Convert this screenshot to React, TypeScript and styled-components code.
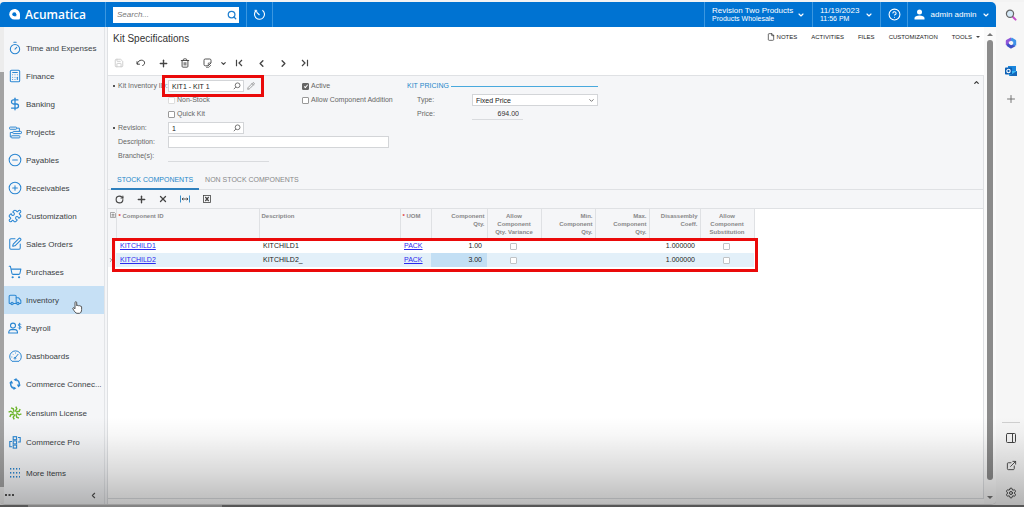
import React from "react";
import styled, { createGlobalStyle } from "styled-components";
import {
  Calculator,
  ChevronDown,
  ChevronLeft,
  ChevronRight,
  ChevronUp,
  CircleHelp,
  CircleMinus,
  CirclePlus,
  DollarSign,
  ExternalLink,
  File,
  PanelRight,
  Pencil,
  Plus,
  Puzzle,
  RotateCw,
  Save,
  Search,
  Settings,
  ShoppingCart,
  SquarePen,
  Timer,
  Trash2,
  Truck,
  X,
} from "lucide-react";

const blue = "#0073d2";
const line = "#dfe1e4";
const panel = "#f5f6f8";
const sans = `"Liberation Sans", Arial, sans-serif`;

const GlobalStyle = createGlobalStyle`
  *, *::before, *::after { box-sizing: border-box; }
  body { margin: 0; background: #f3f3f3; font-family: ${sans}; font-size: 7px; color: #333; }
  button, input, select { font: inherit; color: inherit; margin: 0; padding: 0; border: 0; background: none; }
  svg { display: block; flex: none; }
`;

const Page = styled.div`
  position: relative;
  display: flex;
  flex-direction: column;
  height: 100vh;
  padding-top: 2px;
  overflow: hidden;
`;

const Desktop = styled.div`
  display: flex;
  flex: 1;
  min-height: 0;
`;

const AppWindow = styled.div`
  display: flex;
  flex: 1;
  flex-direction: column;
  min-width: 0;
  border-radius: 4px 5px 5px 5px;
  border-bottom: 1px solid #d8d8d8;
  background: #fff;
  overflow: hidden;
`;

const Taskbar = styled.div`
  height: 2px;
  background: linear-gradient(90deg, #777 28px, #b5b5b5 28px, #b5b5b5 222px, #777 222px);
`;

const Shade = styled.div`
  position: absolute;
  inset: auto 0 0 0;
  height: 90px;
  background: linear-gradient(rgba(0, 0, 0, 0), rgba(0, 0, 0, 0.03) 20%, rgba(0, 0, 0, 0.14) 60%, rgba(0, 0, 0, 0.28));
  pointer-events: none;
`;

/* Top bar */

const TopBar = styled.header`
  display: flex;
  height: 25px;
  background: ${blue};
  color: #fff;
`;

const Brand = styled.a`
  display: flex;
  align-items: center;
  gap: 5px;
  width: 105px;
  padding-left: 9px;
  color: #fff;
  font: 600 12px/16px "Open Sans", "Noto Sans", sans-serif;
  text-decoration: none;
`;

const TopCell = styled.div<{ $w?: number; $grow?: boolean; $pad?: number }>`
  display: flex;
  align-items: center;
  justify-content: center;
  flex: ${(p) => (p.$grow ? "1" : "none")};
  width: ${(p) => (p.$w ? `${p.$w}px` : "auto")};
  padding: 0 ${(p) => p.$pad ?? 0}px;
  border-left: 1px solid #3b97e0;
`;

const TopButton = styled.button`
  display: flex;
  align-items: center;
  justify-content: space-between;
  width: 100%;
  font-size: 8px;
  text-align: left;
  white-space: nowrap;
`;

const IconButton = styled.button`
  display: flex;
  align-items: center;
  justify-content: center;
`;

const TwoLines = styled.span`
  display: flex;
  flex-direction: column;
  line-height: 8px;

  small {
    font-size: 7px;
    line-height: 8px;
  }
`;

const SearchBox = styled.label`
  display: flex;
  align-items: center;
  width: 126px;
  height: 16px;
  padding: 0 2px 0 4px;
  background: #fff;
  color: #1f7fd0;

  input {
    flex: 1;
    min-width: 0;
    outline: 0;
    font-size: 8px;
    font-style: italic;
  }
  input::placeholder { color: #777; }
`;

/* Side navigation */

const Body = styled.div`
  display: flex;
  flex: 1;
  min-height: 0;
`;

const OuterScroll = styled.div`
  display: flex;
  flex-direction: column;
  width: 4px;
  padding: 45px 0 17px;
  background: #ececec;

  &::before {
    content: "";
    flex: 1;
    background: #a3a3a3;
  }
`;

const Nav = styled.nav`
  display: flex;
  flex-direction: column;
  width: 101px;
  padding-top: 7px;
  border-right: 1px solid #e2e4e7;
  background: ${panel};
`;

const Gutter = styled.div`
  width: 3px;
  border-right: 1px solid ${line};
  background: ${panel};
`;

const NavItem = styled.a<{ $h: number; $active?: boolean }>`
  position: relative;
  display: flex;
  align-items: center;
  gap: 4px;
  height: ${(p) => p.$h}px;
  padding-left: 4px;
  background: ${(p) => (p.$active ? "#c6e0f5" : "none")};
  color: #3a3f45;
  font-size: 8px;
  text-decoration: none;
  white-space: nowrap;
`;

const NavGlyph = styled.span`
  display: flex;
  justify-content: center;
  width: 14px;
  color: #2a86d2;
`;

const NavFooter = styled.div`
  display: flex;
  align-items: center;
  justify-content: space-between;
  flex: 1;
  padding: 0 6px 3px 1px;
  color: #555;
`;

const HandCursor = styled.span`
  position: absolute;
  left: 68px;
  top: 15px;
  color: #444;
`;

/* Main area */

const Main = styled.main`
  display: flex;
  flex: 1;
  flex-direction: column;
  min-width: 0;
`;

const TitleRow = styled.div`
  display: flex;
  align-items: center;
  justify-content: space-between;
  height: 24px;
  padding: 0 4px 0 5px;
`;

const Title = styled.h1`
  margin: 0;
  color: #333;
  font-size: 10px;
  font-weight: 400;
  line-height: 12px;
`;

const PageMenu = styled.div`
  display: flex;
  gap: 14px;
  padding-bottom: 4px;
`;

const MenuButton = styled.button`
  display: flex;
  align-items: center;
  gap: 2px;
  color: #222;
  font-size: 6px;
  line-height: 8px;
`;

const Caret = styled.i`
  margin-left: 2px;
  border: 2px solid transparent;
  border-top-color: #444;
  border-bottom: 0;
`;

const Toolbar = styled.div<{ $h: number }>`
  display: flex;
  align-items: center;
  height: ${(p) => p.$h}px;
  color: #444;
`;

const ToolButton = styled.button<{ $faded?: boolean }>`
  display: flex;
  align-items: center;
  justify-content: center;
  width: 22px;
  height: 14px;
  color: ${(p) => (p.$faded ? "#ccc" : "#444")};
`;

const MoreButton = styled(ToolButton)`
  width: 10px;
`;

const Content = styled.div`
  display: flex;
  flex: 1;
  flex-direction: column;
  min-height: 0;
  margin-bottom: 5px;
  border: solid ${line};
  border-width: 1px 1px 1px 0;
`;

const FormGrid = styled.section`
  display: grid;
  position: relative;
  grid-template-columns: 60px 134px 105px 65px 126px;
  grid-template-rows: repeat(6, 14px);
  align-items: center;
  padding: 3px 0 8px;
  background: ${panel};
`;

const Collapse = styled(IconButton)`
  position: absolute;
  top: 3px;
  right: 3px;
`;

const Label = styled.label<{ $row: number; $col?: number; $required?: boolean }>`
  grid-row: ${(p) => p.$row};
  grid-column: ${(p) => p.$col ?? 1};
  padding-left: 5px;
  color: #666;
  line-height: 8px;
  white-space: nowrap;

  &::before {
    content: "";
    display: inline-block;
    width: 2px;
    height: 2px;
    margin-right: 3px;
    vertical-align: middle;
    background: ${(p) => (p.$required ? "#555" : "transparent")};
  }
`;

const Cell = styled.div<{ $row: number; $col: string }>`
  grid-row: ${(p) => p.$row};
  grid-column: ${(p) => p.$col};
  display: flex;
  align-items: center;
  position: relative;
  gap: 3px;
`;

const Box = styled.div<{ $w: number }>`
  display: flex;
  align-items: center;
  width: ${(p) => p.$w}px;
  height: 12px;
  padding: 0 2px 0 3px;
  border: 1px solid #d3d5d8;
  background: #fff;
  color: #222;

  input, select {
    flex: 1;
    min-width: 0;
    height: 10px;
    outline: 0;
    appearance: none;
  }
  svg { color: #666; }
`;

const Underlined = styled.input<{ $w: number }>`
  width: ${(p) => p.$w}px;
  height: 12px;
  padding-right: 4px;
  border-bottom: 1px solid #d9dbde;
  color: #333;
  text-align: right;
`;

const CheckLabel = styled.label`
  display: flex;
  align-items: center;
  gap: 2px;
  color: #666;
  line-height: 8px;
  white-space: nowrap;
`;

const Check = styled.input<{ $pale?: boolean }>`
  display: grid;
  place-items: center;
  width: 7px;
  height: 7px;
  border: 1px solid ${(p) => (p.$pale ? "#c0c3c6" : "#999")};
  border-radius: 1px;
  background: #fff;
  appearance: none;

  &:disabled { border-color: #ddd; }
  &:checked { background: #666; border-color: #666; }
  &:checked::after {
    content: "";
    width: 2px;
    height: 4px;
    border: solid #fff;
    border-width: 0 1px 1px 0;
    transform: rotate(40deg);
  }
`;

const GroupTitle = styled.h2`
  display: flex;
  align-items: center;
  flex: 1;
  gap: 2px;
  margin: 0;
  color: #1d87c9;
  font-size: 7px;
  font-weight: 400;
  line-height: 8px;
  white-space: nowrap;

  &::after {
    content: "";
    flex: 1;
    height: 1px;
    background: #48a9dd;
  }
`;

const RedFrame = styled.div<{ $inset: string }>`
  position: absolute;
  inset: ${(p) => p.$inset};
  border: 3px solid #ea0a0a;
  pointer-events: none;
`;

const Tabs = styled.div`
  display: flex;
  height: 19px;
  padding-left: 3px;
  border-bottom: 1px solid ${line};
  background: ${panel};
`;

const Tab = styled.button<{ $on?: boolean }>`
  margin-bottom: -1px;
  padding: 0 6px;
  border-bottom: 2px solid ${(p) => (p.$on ? "#2f80bd" : "transparent")};
  color: ${(p) => (p.$on ? "#1d87c9" : "#888")};
  white-space: nowrap;
`;

const GridArea = styled.div`
  position: relative;
  width: fit-content;
`;

const GridTools = styled(Toolbar)`
  border-bottom: 1px solid ${line};
  background: ${panel};
`;

const Table = styled.table`
  width: 646px;
  border-collapse: collapse;
  table-layout: fixed;
`;

const Th = styled.th<{ $align?: string }>`
  height: 30px;
  padding: 3px 2px 0;
  border-right: 1px solid ${line};
  background: ${panel};
  color: #888;
  font-size: 6px;
  line-height: 8px;
  text-align: ${(p) => p.$align ?? "left"};
  vertical-align: top;
  white-space: pre-line;

  b { color: #d33; }
`;

const Row = styled.tr<{ $on?: boolean }>`
  height: 14px;
  background: ${(p) => (p.$on ? "#e3f0f9" : "#fff")};
`;

const Td = styled.td<{ $align?: string; $focus?: boolean }>`
  padding: 0 5px 0 4px;
  background: ${(p) => (p.$focus ? "#c3dff4" : "none")};
  color: #222;
  line-height: 8px;
  text-align: ${(p) => p.$align ?? "left"};

  a { color: #2a2aee; }
  input { margin: 0 auto; }
`;

const MarkTd = styled.td`
  padding: 0;
  background: ${panel};
  color: #777;
`;

/* Page scrollbar */

const PageScroll = styled.div`
  display: flex;
  flex-direction: column;
  align-items: center;
  width: 12px;
  padding: 6px 0 5px;
  background: #fafafa;
`;

const Thumb = styled.div`
  flex: 1;
  width: 6px;
  margin: 4px 0 16px;
  border-radius: 3px;
  background: #8b8b8b;
`;

const Arrow = styled.i<{ $down?: boolean }>`
  border: 3px solid transparent;
  ${(p) => (p.$down ? "border-top-color: #777; border-bottom: 0;" : "border-bottom-color: #777; border-top: 0;")}
`;

/* Browser side bar */

const EdgeBar = styled.aside`
  display: flex;
  flex-direction: column;
  align-items: center;
  justify-content: space-between;
  width: 28px;
  padding: 7px 0 6px 2px;
  background: #f6f6f6;
`;

const EdgeGroup = styled.div<{ $rule?: boolean }>`
  display: flex;
  flex-direction: column;
  align-items: center;
  gap: 16px;
  width: 18px;
  padding-top: ${(p) => (p.$rule ? "9px" : "0")};
  border-top: ${(p) => (p.$rule ? "1px solid #d0d0d0" : "0")};
  color: #444;
`;

const icon = { size: 14, strokeWidth: 1.8 };
const tool = { size: 10, strokeWidth: 2.2 };
const caret = { size: 8, strokeWidth: 3.5 };

const ProjectsIcon = () => (
  <svg width="13" height="13" viewBox="0 0 12 12" fill="none" stroke="currentColor" strokeWidth="0.9">
    <rect x="0.5" y="1" width="6.5" height="2" rx="0.6" />
    <rect x="3.5" y="5" width="8" height="2" rx="0.6" />
    <rect x="2" y="9" width="8" height="2" rx="0.6" />
    <path d="M7 2h2.600v3M3.500 6H1.200v4H2" />
  </svg>
);

const PayrollIcon = () => (
  <svg width="14" height="12" viewBox="0 0 14 12" fill="none" stroke="currentColor" strokeWidth="1.1">
    <circle cx="5" cy="3.6" r="2.5" />
    <path d="M.7 11c0-2.200 1-3.400 2.600-3.400h3.600c1.600 0 2.600 1.200 2.600 3.400z" />
    <path strokeWidth="0.9" d="M13 2.700c-.3-.6-.8-.8-1.400-.8-.9 0-1.400.4-1.400 1.100 0 .6.5.9 1.400 1.100 1 .2 1.500.5 1.500 1.200s-.6 1.100-1.500 1.100c-.7 0-1.200-.2-1.500-.8M11.600.8v6.800" />
  </svg>
);

const DashboardIcon = () => (
  <svg width="13" height="13" viewBox="0 0 13 13" fill="none" stroke="currentColor">
    <path d="M3 11.300a5.800 5.800 0 1 1 7 0zM6 8l3.300-4" />
    <circle cx="6" cy="8.200" r=".9" />
    <path strokeWidth="0.8" d="M2.300 7h1M3.600 3.900l.7.7M6.500 2.500v1" />
  </svg>
);

const KensiumIcon = () => (
  <svg width="14" height="14" viewBox="-7 -7 14 14" fill="none" stroke="#6db52c" strokeWidth="1.4">
    {[0, 45, 90, 135, 180, 225, 270, 315].map((a) => (
      <path key={a} transform={`rotate(${a})`} d="M0-1.500 1.800-4.200.8-6.400" />
    ))}
  </svg>
);

const CommerceProIcon = () => (
  <svg width="12" height="13" viewBox="0 0 12 13" fill="none" stroke="currentColor" strokeWidth="1.1">
    <rect x="4.2" y=".7" width="3.400" height="3" />
    <rect x="4.2" y="4.9" width="3.400" height="3" />
    <rect x="4.2" y="9.1" width="3.400" height="3" />
    <path d="M9 1.500h2.200v4.500H9M3 5.500H.8v5.200H3" />
  </svg>
);

const DotsIcon = () => (
  <svg width="10" height="10" viewBox="0 0 10 10" fill="currentColor">
    {[0, 3, 6, 9].map((x) => [0, 4, 8].map((y) => <rect key={`${x}-${y}`} x={x} y={y} width="1.3" height="1.6" />))}
  </svg>
);

const SyncIcon = () => (
  <svg width="12" height="12" viewBox="0 0 12 12" fill="none" stroke="currentColor" strokeWidth="1.4">
    <path d="M5 10.400A4.400 4.400 0 0 1 2.200 4M7 1.600A4.400 4.400 0 0 1 9.800 8" />
    <path fill="currentColor" stroke="none" d="M7.500 0v3.600L4.600 1.800zM4.500 12V8.400l2.900 1.800zM0 5.200 2.600 2.400 4.200 5.600zM12 6.800 9.400 9.600 7.800 6.400z" />
  </svg>
);

const UndoIcon = () => (
  <svg width="10" height="8" viewBox="0 0 10 8" fill="none" stroke="currentColor">
    <path d="M1.200 5C1.800 2.500 3.500 1.200 5.500 1.200c1.900 0 3.100 1.200 3.100 2.700 0 1.300-.9 2.300-2.300 2.700M1 2.300v2.900h2.900" />
  </svg>
);

const StepIcon = ({ last }: { last?: boolean }) => (
  <svg width="8" height="8" viewBox="0 0 8 8" fill="none" stroke="currentColor" strokeWidth="1.2">
    {last ? <path d="M1 1l3 3-3 3M6.500.7v6.600" /> : <path d="M7 1 4 4l3 3M1.500.7v6.600" />}
  </svg>
);

const ClipboardIcon = () => (
  <svg width="9" height="10" viewBox="0 0 9 10" fill="none" stroke="currentColor" strokeWidth="0.9">
    <path d="M2.300 1h4.400Q8 1 8 2.300V5L5.200 7.800H2.300Q1 7.800 1 6.500V2.300Q1 1 2.300 1z" />
    <path strokeWidth="0.7" d="M7.800 5H5.300v2.600M3 9.300h2.800L8 7" />
  </svg>
);

const FitIcon = () => (
  <svg width="10" height="8" viewBox="0 0 10 8" fill="none">
    <path stroke="#3c8fc9" d="M.5.500v7M9.500.500v7" />
    <path stroke="#444" strokeWidth="0.9" d="M2 4h6M3.300 2.800 2 4l1.300 1.200M6.700 2.800 8 4 6.700 5.200" />
  </svg>
);

const ExcelIcon = () => (
  <svg width="8" height="8" viewBox="0 0 8 8" fill="none" stroke="#444">
    <rect x=".5" y=".5" width="7" height="7" strokeWidth="0.8" />
    <path strokeWidth="1.200" d="M2.300 2l3.400 4M5.700 2 2.300 6" />
  </svg>
);

const LookupIcon = () => (
  <svg width="8" height="8" viewBox="0 0 8 8" fill="none" stroke="currentColor" strokeWidth="0.9">
    <circle cx="4.600" cy="3.300" r="2.400" />
    <path d="M2.900 5 .8 7.200" />
  </svg>
);

const TimerGlyph = () => (
  <svg width="13" height="13" viewBox="0 0 13 13" fill="none" stroke="currentColor" strokeWidth="1.1">
    <path d="M3.200 2.500a5 5 0 1 0 6.200-.3M6.500 7 3.800 4.300" />
    <path d="M1.500 2.300h2.200v2.200" strokeWidth="0.9" />
  </svg>
);

const UserGlyph = () => (
  <svg width="11" height="11" viewBox="0 0 11 11" fill="currentColor">
    <circle cx="5.500" cy="3" r="2.500" />
    <path d="M.5 10.500V9c0-1.700 2.500-2.600 5-2.600s5 .9 5 2.600v1.500z" />
  </svg>
);

const BrandMark = () => (
  <svg width="11" height="11" viewBox="0 0 11 11">
    <path fill="#fff" d="M5.500 0C8.500 0 11 2.500 11 5.500V9q0 1.500-1.500 1.500h-4A5.200 5.200 0 0 1 5.500 0z" />
    <circle cx="5.300" cy="5.200" r="2" fill={blue} />
    <path fill={blue} d="M5.300 7.200h2v-2z" />
  </svg>
);

const GridMark = () => (
  <svg width="6" height="6" viewBox="0 0 6 6" fill="none" stroke="currentColor" strokeWidth="0.7">
    <path d="M.5.500h4l1 1v4h-5zM1.500 2.500h3M1.500 4h3M3 1.500v3" />
  </svg>
);

const HandGlyph = () => (
  <svg width="11" height="13" viewBox="0 0 11 13" fill="#fff" stroke="currentColor" strokeWidth="0.9">
    <path d="M3 7.800V1.700c0-1.400 1.700-1.400 1.700 0v3.100c.3-.8 1.500-.7 1.700.2.400-.7 1.500-.5 1.700.3.500-.5 1.500-.2 1.500.7v2.500c0 2-.9 3.800-2.200 3.800H5C3.500 12.300 2.200 10 .9 7.900c-.5-1 .6-1.600 1.200-.9z" />
  </svg>
);

const MagnifierColour = () => (
  <svg width="12" height="12" viewBox="0 0 12 12" fill="none">
    <path stroke="#c44fc8" strokeWidth="2" strokeLinecap="round" d="M8 8l2.600 2.600" />
    <circle cx="5" cy="4.800" r="3.600" fill="#d5e9f7" stroke="#666" strokeWidth="1.200" />
  </svg>
);

const CopilotGlyph = () => (
  <svg width="12" height="12" viewBox="0 0 12 12" fill="none" strokeWidth="3" strokeLinejoin="round">
    <path stroke="#8f55d8" d="M6.500 1.900 2.300 4v4" />
    <path stroke="#3d4fc4" d="M2.300 7.500 6 10l3.700-2" />
    <path stroke="#3f93e8" d="M9.700 8.500V4L6 1.900" />
  </svg>
);

const OutlookGlyph = () => (
  <svg width="12" height="12" viewBox="0 0 12 12">
    <rect x="3" y="1" width="8" height="7" fill="#1a86dd" />
    <path fill="#38b6f5" d="M4 6h8v5H4z" />
    <path fill="#1467b8" d="M4 11 12 6v5z" />
    <rect x="0" y="2.500" width="7" height="7" rx=".8" fill="#0a5fb4" />
    <circle cx="3.500" cy="6" r="1.700" fill="none" stroke="#fff" strokeWidth="1.100" />
  </svg>
);

const nav: { label: string; glyph: React.ReactNode; h?: number; active?: boolean }[] = [
  { label: "Time and Expenses", glyph: <Timer {...icon} /> },
  { label: "Finance", glyph: <Calculator {...icon} /> },
  { label: "Banking", glyph: <DollarSign {...icon} strokeWidth={2.2} /> },
  { label: "Projects", glyph: <ProjectsIcon /> },
  { label: "Payables", glyph: <CircleMinus {...icon} /> },
  { label: "Receivables", glyph: <CirclePlus {...icon} /> },
  { label: "Customization", glyph: <Puzzle {...icon} /> },
  { label: "Sales Orders", glyph: <SquarePen {...icon} /> },
  { label: "Purchases", glyph: <ShoppingCart {...icon} /> },
  { label: "Inventory", glyph: <Truck {...icon} />, active: true },
  { label: "Payroll", glyph: <PayrollIcon /> },
  { label: "Dashboards", glyph: <DashboardIcon /> },
  { label: "Commerce Connec...", glyph: <SyncIcon /> },
  { label: "Kensium License", glyph: <KensiumIcon />, h: 30 },
  { label: "Commerce Pro", glyph: <CommerceProIcon /> },
  { label: "More Items", glyph: <DotsIcon />, h: 34 },
];

const columns: { title: string; w: number; align?: string; required?: boolean }[] = [
  { title: "Component ID", w: 143, required: true },
  { title: "Description", w: 141 },
  { title: "UOM", w: 31, required: true },
  { title: "Component\nQty.", w: 56, align: "right" },
  { title: "Allow\nComponent\nQty. Variance", w: 54, align: "center" },
  { title: "Min.\nComponent\nQty.", w: 54, align: "right" },
  { title: "Max.\nComponent\nQty.", w: 54, align: "right" },
  { title: "Disassembly\nCoeff.", w: 51, align: "right" },
  { title: "Allow\nComponent\nSubstitution", w: 54, align: "center" },
];

const rows = [
  { id: "KITCHILD1", description: "KITCHILD1", uom: "PACK", qty: "1.00", coeff: "1.000000" },
  { id: "KITCHILD2", description: "KITCHILD2_", uom: "PACK", qty: "3.00", coeff: "1.000000", on: true },
];

export default function App() {
  return (
    <Page>
      <GlobalStyle />
      <Desktop>
        <AppWindow>
          <TopBar>
            <Brand href="#">
              <BrandMark />
              Acumatica
            </Brand>
            <TopCell $w={141}>
              <SearchBox>
                <input type="search" aria-label="Search" placeholder="Search..." />
                <Search size={10} strokeWidth={3} />
              </SearchBox>
            </TopCell>
            <TopCell $w={26}>
              <IconButton aria-label="Recent">
                <TimerGlyph />
              </IconButton>
            </TopCell>
            <TopCell $grow />
            <TopCell $w={108} $pad={7}>
              <TopButton>
                <TwoLines>
                  Revision Two Products
                  <small>Products Wholesale</small>
                </TwoLines>
                <ChevronDown {...caret} />
              </TopButton>
            </TopCell>
            <TopCell $w={68} $pad={7}>
              <TopButton>
                <TwoLines>
                  11/19/2023
                  <small>11:56 PM</small>
                </TwoLines>
                <ChevronDown {...caret} />
              </TopButton>
            </TopCell>
            <TopCell $w={27}>
              <IconButton aria-label="Help">
                <CircleHelp size={13} />
              </IconButton>
            </TopCell>
            <TopCell $w={89} $pad={6}>
              <TopButton>
                <UserGlyph />
                <span>admin admin</span>
                <ChevronDown {...caret} />
              </TopButton>
            </TopCell>
          </TopBar>

          <Body>
            <OuterScroll />
            <Nav>
              {nav.map((n) => (
                <NavItem key={n.label} href="#" $h={n.h ?? 28} $active={n.active}>
                  <NavGlyph>{n.glyph}</NavGlyph>
                  {n.label}
                  {n.active && (
                    <HandCursor>
                      <HandGlyph />
                    </HandCursor>
                  )}
                </NavItem>
              ))}
              <NavFooter>
                <IconButton aria-label="Options">
                  <svg width="9" height="3" viewBox="0 0 9 3" fill="currentColor">
                    <rect width="2" height="2" />
                    <rect width="2" height="2" x="3.500" />
                    <rect width="2" height="2" x="7" />
                  </svg>
                </IconButton>
                <IconButton aria-label="Collapse menu">
                  <ChevronLeft size={9} strokeWidth={3} />
                </IconButton>
              </NavFooter>
            </Nav>
            <Gutter />

            <Main>
              <TitleRow>
                <Title>Kit Specifications</Title>
                <PageMenu>
                  <MenuButton>
                    <File size={8} />
                    NOTES
                  </MenuButton>
                  <MenuButton>ACTIVITIES</MenuButton>
                  <MenuButton>FILES</MenuButton>
                  <MenuButton>CUSTOMIZATION</MenuButton>
                  <MenuButton>
                    TOOLS
                    <Caret />
                  </MenuButton>
                </PageMenu>
              </TitleRow>

              <Toolbar $h={24}>
                <ToolButton aria-label="Save" $faded><Save {...tool} /></ToolButton>
                <ToolButton aria-label="Undo"><UndoIcon /></ToolButton>
                <ToolButton aria-label="Add"><Plus size={11} strokeWidth={3} /></ToolButton>
                <ToolButton aria-label="Delete"><Trash2 {...tool} /></ToolButton>
                <ToolButton aria-label="Copy"><ClipboardIcon /></ToolButton>
                <MoreButton aria-label="Copy options"><ChevronDown size={7} strokeWidth={4} /></MoreButton>
                <ToolButton aria-label="First"><StepIcon /></ToolButton>
                <ToolButton aria-label="Previous"><ChevronLeft size={11} strokeWidth={3} /></ToolButton>
                <ToolButton aria-label="Next"><ChevronRight size={11} strokeWidth={3} /></ToolButton>
                <ToolButton aria-label="Last"><StepIcon last /></ToolButton>
              </Toolbar>

              <Content>
                <FormGrid>
                  <Label $row={1} $required htmlFor="kit">Kit Inventory ID:</Label>
                  <Cell $row={1} $col="2">
                    <Box $w={76}>
                      <input id="kit" defaultValue="KIT1 - KIT 1" />
                      <LookupIcon />
                    </Box>
                    <IconButton aria-label="Edit item"><Pencil size={8} color="#777" /></IconButton>
                    <RedFrame $inset="-5px 38px -5px -6px" />
                  </Cell>
                  <Cell $row={2} $col="2">
                    <CheckLabel><Check type="checkbox" disabled />Non-Stock</CheckLabel>
                  </Cell>
                  <Cell $row={3} $col="2">
                    <CheckLabel><Check type="checkbox" />Quick Kit</CheckLabel>
                  </Cell>
                  <Label $row={4} $required htmlFor="revision">Revision:</Label>
                  <Cell $row={4} $col="2">
                    <Box $w={76}>
                      <input id="revision" defaultValue="1" />
                      <LookupIcon />
                    </Box>
                  </Cell>
                  <Label $row={5} htmlFor="description">Description:</Label>
                  <Cell $row={5} $col="2 / 4">
                    <Box $w={221}>
                      <input id="description" />
                    </Box>
                  </Cell>
                  <Label $row={6} htmlFor="branches">Branche(s):</Label>
                  <Cell $row={6} $col="2">
                    <Underlined $w={101} id="branches" readOnly />
                  </Cell>

                  <Cell $row={1} $col="3">
                    <CheckLabel><Check type="checkbox" defaultChecked />Active</CheckLabel>
                  </Cell>
                  <Cell $row={2} $col="3">
                    <CheckLabel><Check type="checkbox" />Allow Component Addition</CheckLabel>
                  </Cell>

                  <Cell $row={1} $col="4 / 6">
                    <GroupTitle>KIT PRICING</GroupTitle>
                  </Cell>
                  <Label $row={2} $col={4} htmlFor="type">Type:</Label>
                  <Cell $row={2} $col="5">
                    <Box $w={126}>
                      <select id="type" defaultValue="Fixed Price">
                        <option>Fixed Price</option>
                      </select>
                      <ChevronDown size={7} strokeWidth={3} />
                    </Box>
                  </Cell>
                  <Label $row={3} $col={4} htmlFor="price">Price:</Label>
                  <Cell $row={3} $col="5">
                    <Underlined $w={51} id="price" defaultValue="694.00" readOnly />
                  </Cell>
                  <Collapse aria-label="Collapse form"><ChevronUp size={7} strokeWidth={4} /></Collapse>
                </FormGrid>

                <Tabs role="tablist">
                  <Tab role="tab" aria-selected $on>STOCK COMPONENTS</Tab>
                  <Tab role="tab">NON STOCK COMPONENTS</Tab>
                </Tabs>

                <GridTools $h={19}>
                  <ToolButton aria-label="Refresh"><RotateCw size={9} strokeWidth={3} /></ToolButton>
                  <ToolButton aria-label="Add row"><Plus size={11} strokeWidth={3} /></ToolButton>
                  <ToolButton aria-label="Delete row"><X size={10} strokeWidth={3} /></ToolButton>
                  <ToolButton aria-label="Fit to screen"><FitIcon /></ToolButton>
                  <ToolButton aria-label="Export to Excel"><ExcelIcon /></ToolButton>
                </GridTools>

                <GridArea>
                  <Table>
                    <colgroup>
                      <col width={8} />
                      {columns.map((c) => (
                        <col key={c.title} width={c.w} />
                      ))}
                    </colgroup>
                    <thead>
                      <tr>
                        <Th><GridMark /></Th>
                        {columns.map((c) => (
                          <Th key={c.title} $align={c.align}>
                            {c.required && <b>* </b>}
                            {c.title}
                          </Th>
                        ))}
                      </tr>
                    </thead>
                    <tbody>
                      {rows.map((r) => (
                        <Row key={r.id} $on={r.on}>
                          <MarkTd>{r.on && <ChevronRight size={6} strokeWidth={3} />}</MarkTd>
                          <Td><a href="#">{r.id}</a></Td>
                          <Td>{r.description}</Td>
                          <Td><a href="#">{r.uom}</a></Td>
                          <Td $align="right" $focus={r.on}>{r.qty}</Td>
                          <Td><Check $pale type="checkbox" aria-label="Allow component qty. variance" /></Td>
                          <Td />
                          <Td />
                          <Td $align="right">{r.coeff}</Td>
                          <Td><Check $pale type="checkbox" aria-label="Allow component substitution" /></Td>
                        </Row>
                      ))}
                    </tbody>
                  </Table>
                  <RedFrame $inset="29px -3px -5px 4px" />
                </GridArea>
              </Content>
            </Main>

            <PageScroll>
              <Arrow />
              <Thumb />
              <Arrow $down />
            </PageScroll>
          </Body>
        </AppWindow>

        <EdgeBar>
          <EdgeGroup>
            <MagnifierColour />
            <CopilotGlyph />
            <OutlookGlyph />
            <Plus size={12} strokeWidth={1.8} color="#666" />
          </EdgeGroup>
          <EdgeGroup $rule>
            <PanelRight size={12} />
            <ExternalLink size={11} />
            <Settings size={12} />
          </EdgeGroup>
        </EdgeBar>
      </Desktop>
      <Taskbar />
      <Shade />
    </Page>
  );
}
